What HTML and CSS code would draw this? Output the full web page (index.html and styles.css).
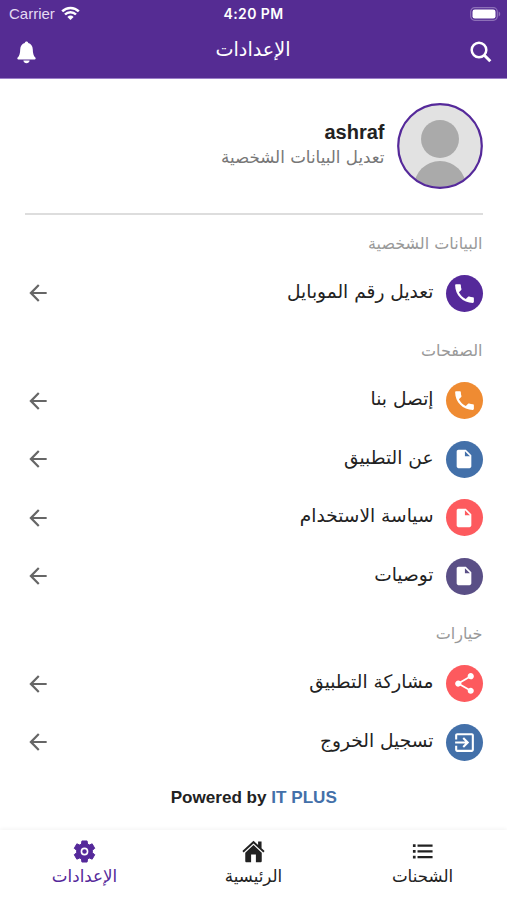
FILE: index.html
```
<!DOCTYPE html>
<html lang="ar" dir="rtl">
<head>
    <meta charset="UTF-8">
    <meta name="viewport" content="width=device-width, initial-scale=1.0">
    <title>الإعدادات</title>
    <link rel="stylesheet" href="styles.css">
</head>
<body>
    <svg class="sprite" width="0" height="0">
        <symbol id="arrow" viewBox="0 0 24 24"><path d="M20 11H7.83l5.59-5.59L12 4l-8 8 8 8 1.41-1.41L7.83 13H20v-2z"/></symbol>
        <symbol id="phone" viewBox="0 0 24 24"><path d="M6.62 10.79c1.44 2.83 3.76 5.14 6.59 6.59l2.2-2.2c.27-.27.67-.36 1.02-.24 1.12.37 2.33.57 3.57.57.55 0 1 .45 1 1V20c0 .55-.45 1-1 1C10.61 21 3 13.39 3 4c0-.55.45-1 1-1h3.5c.55 0 1 .45 1 1 0 1.25.2 2.45.57 3.57.11.35.03.74-.25 1.02l-2.2 2.2z"/></symbol>
        <symbol id="file" viewBox="0 0 24 24"><path d="M6 2c-1.1 0-2 .9-2 2v16c0 1.1.9 2 2 2h12c1.1 0 2-.9 2-2V8l-6-6H6zm7 7V3.5L18.5 9H13z"/></symbol>
        <symbol id="share" viewBox="0 0 24 24"><path d="M18 16.08c-.76 0-1.44.3-1.96.77L8.91 12.7c.05-.23.09-.46.09-.7s-.04-.47-.09-.7l7.05-4.11c.54.5 1.25.81 2.04.81 1.66 0 3-1.34 3-3s-1.34-3-3-3-3 1.34-3 3c0 .24.04.47.09.7L8.04 9.81C7.5 9.31 6.79 9 6 9c-1.66 0-3 1.34-3 3s1.34 3 3 3c.79 0 1.5-.31 2.04-.81l7.12 4.16c-.05.21-.08.43-.08.65 0 1.61 1.31 2.92 2.92 2.92s2.92-1.31 2.92-2.92-1.31-2.92-2.92-2.92z"/></symbol>
        <symbol id="exit" viewBox="0 0 24 24"><path d="M10.09 15.59L11.5 17l5-5-5-5-1.41 1.41L12.67 11H3v2h9.67l-2.58 2.59zM19 3H5c-1.11 0-2 .9-2 2v4h2V5h14v14H5v-4H3v4c0 1.1.89 2 2 2h14c1.1 0 2-.9 2-2V5c0-1.1-.9-2-2-2z"/></symbol>
    </svg>

    <header>
        <div class="status-bar" dir="ltr">
            <div class="carrier">
                <span>Carrier</span>
                <svg width="19" height="15" viewBox="0 0 19 15" fill="none" stroke="#fff" stroke-width="2.5">
                    <path d="M1.2 5.4a11.7 11.7 0 0 1 16.6 0M4 8.5a7.7 7.7 0 0 1 11 0"/>
                    <path d="M9.5 14L6.4 10.9a4.4 4.4 0 0 1 6.2 0z" fill="#fff" stroke="none"/>
                </svg>
            </div>
            <div class="time">4:20 PM</div>
            <div class="battery">
                <svg width="31" height="14" viewBox="0 0 31 14">
                    <rect x=".7" y=".7" width="26.6" height="12.6" rx="4" fill="none" stroke="#8d70b8" stroke-width="1.2"/>
                    <rect x="2.5" y="2.5" width="23" height="9" rx="2.3" fill="#fff"/>
                    <path d="M28.7 4.5c2 .8 2 4.2 0 5z" fill="#8d70b8"/>
                </svg>
            </div>
        </div>
        <div class="title-bar" dir="ltr">
            <svg width="19" height="23" viewBox="0 0 20 23" fill="#fff" preserveAspectRatio="none">
                <path d="M10 .5c-1 0-1.6.6-1.8 1.4C5.3 2.6 3.5 5 3.4 8.2c-.1 4.3-.8 6.500-2.700 8.400-.7.9-.4 1.900.7 1.900h17.200c1.100 0 1.400-1 .7-1.900-1.900-1.900-2.600-4.100-2.700-8.400-.1-3.200-1.900-5.600-4.800-6.300C11.600 1.100 11 .5 10 .5z"/>
                <path d="M6.700 19.500h6.600c-.3 1.700-1.600 2.700-3.300 2.700s-3-1-3.300-2.700z"/>
            </svg>
            <h1><span lang="ar">الإعدادات</span></h1>
            <svg width="22" height="22" viewBox="0 0 22 22" fill="none" stroke="#fff">
                <circle cx="9" cy="9" r="7.3" stroke-width="2.5"/>
                <path d="M14.3 14.3l6 6" stroke-width="3"/>
            </svg>
        </div>
    </header>

    <main>
        <section class="profile">
            <svg class="avatar" viewBox="0 0 86 86">
                <clipPath id="round"><circle cx="43" cy="43" r="41"/></clipPath>
                <circle cx="43" cy="43" r="41.5" fill="#e2e2e2"/>
                <g clip-path="url(#round)" fill="#aaa">
                    <circle cx="43" cy="36" r="19"/>
                    <circle cx="43" cy="84" r="26"/>
                </g>
                <circle cx="43" cy="43" r="41.8" fill="none" stroke="#55299a" stroke-width="2.2"/>
            </svg>
            <div class="profile-text">
                <div class="name">ashraf</div>
                <div class="edit">تعديل البيانات الشخصية</div>
            </div>
        </section>

        <h2><span>البيانات الشخصية</span></h2>
        <a class="row">
            <span class="icon purple"><svg><use href="#phone"/></svg></span>
            <span class="label">تعديل رقم الموبايل</span>
            <svg class="arrow"><use href="#arrow"/></svg>
        </a>

        <h2><span>الصفحات</span></h2>
        <a class="row">
            <span class="icon orange"><svg><use href="#phone"/></svg></span>
            <span class="label">إتصل بنا</span>
            <svg class="arrow"><use href="#arrow"/></svg>
        </a>
        <a class="row">
            <span class="icon blue"><svg class="file"><use href="#file"/></svg></span>
            <span class="label">عن التطبيق</span>
            <svg class="arrow"><use href="#arrow"/></svg>
        </a>
        <a class="row">
            <span class="icon red"><svg class="file"><use href="#file"/></svg></span>
            <span class="label">سياسة الاستخدام</span>
            <svg class="arrow"><use href="#arrow"/></svg>
        </a>
        <a class="row">
            <span class="icon indigo"><svg class="file"><use href="#file"/></svg></span>
            <span class="label">توصيات</span>
            <svg class="arrow"><use href="#arrow"/></svg>
        </a>

        <h2><span>خيارات</span></h2>
        <a class="row">
            <span class="icon red"><svg><use href="#share"/></svg></span>
            <span class="label">مشاركة التطبيق</span>
            <svg class="arrow"><use href="#arrow"/></svg>
        </a>
        <a class="row">
            <span class="icon blue"><svg><use href="#exit"/></svg></span>
            <span class="label">تسجيل الخروج</span>
            <svg class="arrow"><use href="#arrow"/></svg>
        </a>

        <p class="powered" dir="ltr">Powered by <span>IT PLUS</span></p>
    </main>

    <nav>
        <a class="tab">
            <svg viewBox="0 0 24 24" fill="#222">
                <path d="M2 4.500h2.800v2.800H2zM6.800 4.700h15.700v2.400H6.800zM2 10.500h2.800v2.800H2zM6.800 10.700h15.700v2.400H6.800zM2 16.500h2.800v2.800H2zM6.800 16.700h15.700v2.400H6.800z"/>
            </svg>
            <span>الشحنات</span>
        </a>
        <a class="tab">
            <svg viewBox="0 0 24 24" fill="#222">
                <path d="M12 .8L.4 11.600l1.300 1.500L12 3.600l10.300 9.500 1.300-1.500-3.200-3V1.500h-3.600v3.800z"/>
                <path d="M12 5.200l-8.600 8V22c0 .8.500 1.300 1.300 1.300h4.800v-8.200h5v8.200h4.800c.8 0 1.300-.5 1.300-1.300v-8.800z"/>
            </svg>
            <span>الرئيسية</span>
        </a>
        <a class="tab active">
            <svg viewBox="0 0 24 24" fill="#55299a">
                <path d="M9.300 1h5.400l.5 3.200 1.800 1 3-1.200 2.700 4.700-2.500 2v2.600l2.500 2-2.700 4.700-3-1.200-1.800 1-.5 3.200H9.300l-.5-3.200-1.800-1L4 20l-2.700-4.700 2.500-2v-2.600l-2.500-2L4 4l3 1.200 1.800-1z" stroke="#55299a" stroke-linejoin="round"/>
                <circle cx="12" cy="12" r="3.200" stroke="#fff" stroke-width="1.700"/>
            </svg>
            <span>الإعدادات</span>
        </a>
    </nav>
</body>
</html>
```
FILE: styles.css
```
* {
    margin: 0;
    padding: 0;
    box-sizing: border-box;
}

body {
    height: 900px;
    display: flex;
    flex-direction: column;
    font-family: 'Liberation Sans', 'DejaVu Sans', sans-serif;
    background-color: #fff;
    color: #222;
    overflow: hidden;
}

svg {
    display: block;
    flex: none;
}

.sprite {
    position: absolute;
}

header {
    height: 79px;
    background-color: #552c93;
    border-bottom: 1px solid #9b7fc8;
    color: #fff;
}

.status-bar {
    display: grid;
    grid-template-columns: 1fr auto 1fr;
    align-items: center;
    height: 27px;
    padding: 0 6px 0 9px;
    font-size: 15px;
}

.carrier {
    display: flex;
    align-items: center;
    gap: 6px;
    color: #e4daf2;
}

.time {
    margin-right: 3px;
    font-family: Inter, sans-serif;
    font-size: 14px;
    font-weight: 600;
    letter-spacing: 0.4px;
}

.battery {
    display: flex;
    justify-content: flex-end;
}

.title-bar {
    display: flex;
    align-items: center;
    justify-content: space-between;
    height: 50px;
    padding: 0 15px 0 17px;
}

h1 {
    padding-bottom: 4px;
    font-family: 'DejaVu Sans', sans-serif;
    font-size: 19.2px;
    font-weight: normal;
    line-height: 40px;
}

main {
    flex: 1;
    padding: 0 24.5px 0 25px;
}

.profile {
    display: flex;
    gap: 12px;
    height: 136px;
    padding-top: 24px;
    border-bottom: 2px solid #ddd;
}

.avatar {
    width: 86px;
    height: 86px;
}

.profile-text {
    padding-top: 17px;
}

.name {
    font-size: 20px;
    font-weight: bold;
    line-height: 24px;
}

.edit {
    font-family: 'DejaVu Sans', sans-serif;
    font-size: 16.7px;
    line-height: 27px;
    color: #777;
}

h2 {
    display: flex;
    align-items: center;
    height: 49px;
    padding-top: 7px;
    font-family: 'DejaVu Sans', sans-serif;
    font-size: 16px;
    font-weight: normal;
    color: #999;
}

.row {
    display: flex;
    align-items: center;
    height: 58.5px;
}

.icon {
    display: flex;
    align-items: center;
    justify-content: center;
    width: 37px;
    height: 37px;
    border-radius: 50%;
}

.icon svg {
    width: 25px;
    height: 25px;
    fill: #fff;
}

.icon .file {
    width: 22px;
    height: 22px;
}

.purple {
    background-color: #55299a;
}

.orange {
    background-color: #ef8b32;
}

.blue {
    background-color: #4370a9;
}

.red {
    background-color: #fd5a5e;
}

.indigo {
    background-color: #5a4f86;
}

.label {
    flex: 1;
    margin-right: 12px;
    padding-bottom: 4px;
    font-family: 'DejaVu Sans', sans-serif;
    font-size: 18.6px;
}

.arrow {
    width: 26px;
    height: 26px;
    fill: #666;
}

.powered {
    padding-top: 16px;
    font-size: 17.1px;
    font-weight: bold;
    line-height: 20px;
    text-align: center;
}

.powered span {
    color: #4370a9;
}

nav {
    display: flex;
    height: 70px;
    box-shadow: 0 -1px 4px rgba(0, 0, 0, 0.05);
}

.tab {
    flex: 1;
    display: flex;
    flex-direction: column;
    align-items: center;
    padding-top: 10px;
    font-family: 'DejaVu Sans', sans-serif;
    font-size: 16.7px;
    line-height: 27px;
}

.tab svg {
    width: 23px;
    height: 23px;
}

.active {
    color: #55299a;
}
```
